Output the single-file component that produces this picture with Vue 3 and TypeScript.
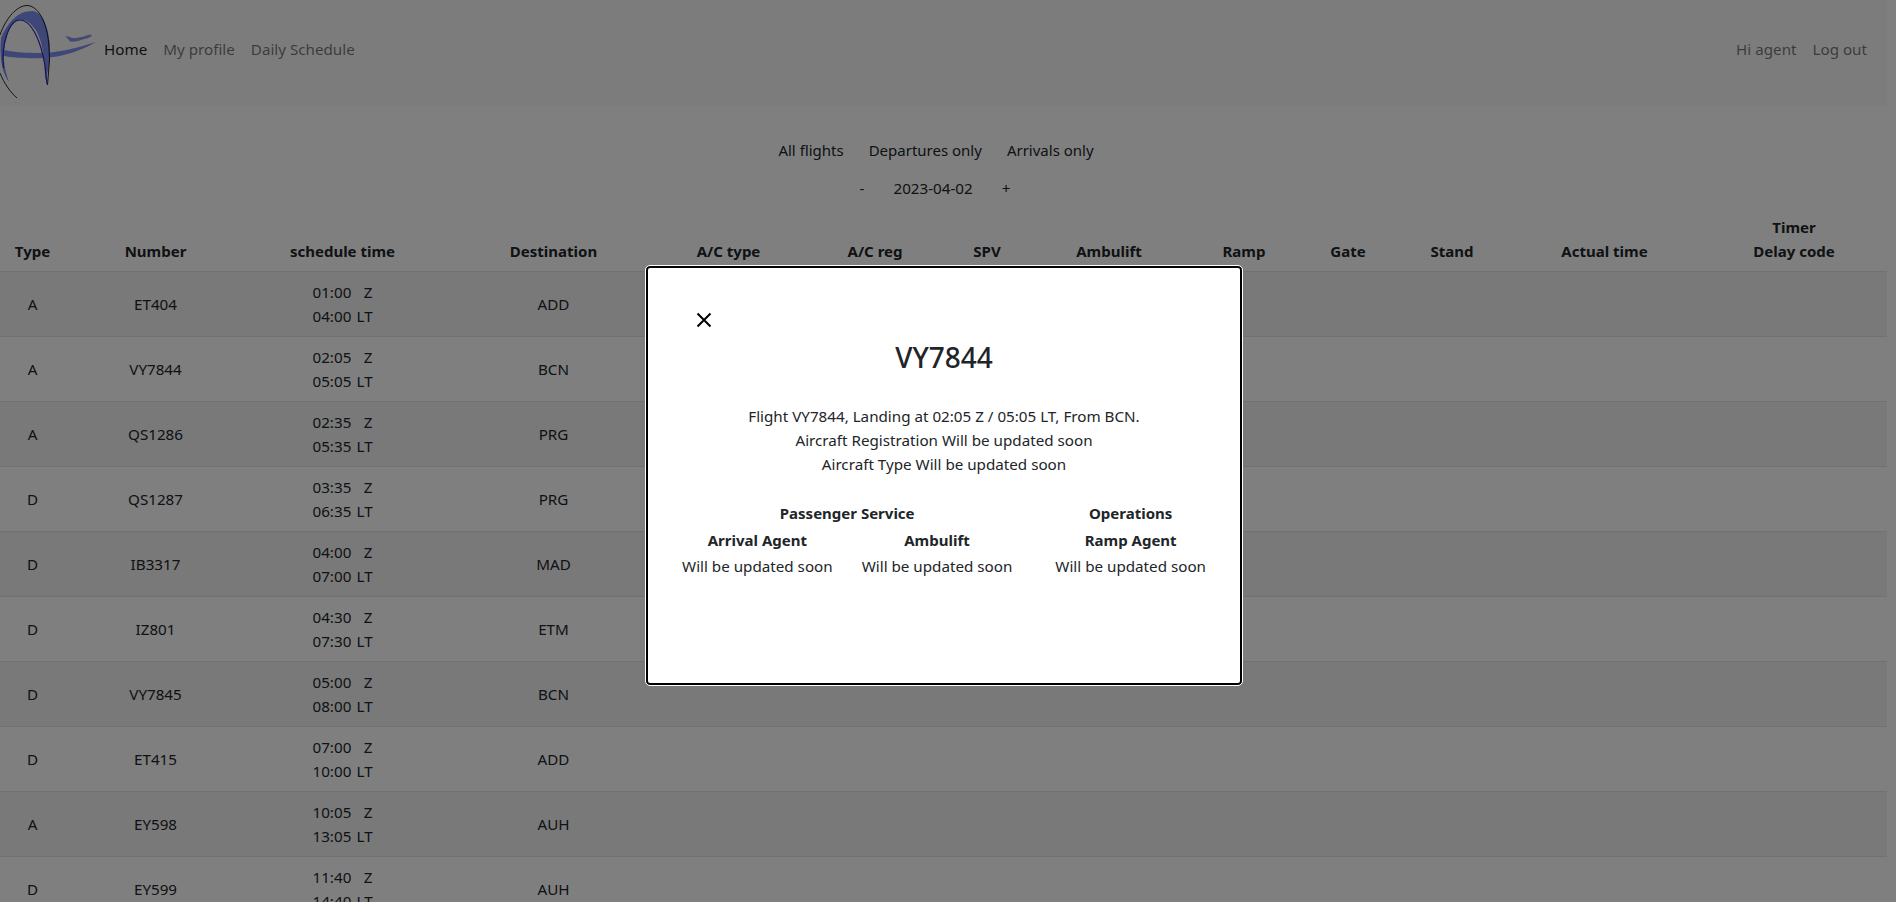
<template>
  <div class="page">
    <nav class="navbar">
      <svg class="logo" viewBox="0 0 100 100" aria-label="logo">
        <path d="M1 38 C8 22 18 11 32 11 C43 12 48 26 50 45 L50 58 C49 66 48 72 45 80 C45 60 43 44 37 32 C32 24 26 19 20 20 C12 21 7 32 5 44 C3 55 3 65 9 82 C3 74 -1 60 1 38Z" fill="#7f8cf0" />
        <path d="M4 50 C18 53 32 53 44 53 C62 52 80 47 96 42 C82 50 64 57 44 58 C30 58.5 14 58 4 56 Z" fill="#7f8cf0" />
        <path d="M65.5 36 L68.5 36.5 C70 37.5 73 38 76 38 L84 36.5 C87 35 90 34.5 92 35 C91 37 88 38.5 84 39 C80 41 74 42 70 41.5 Z" fill="#8a94e0" />
        <path d="M0 35 C6 18 17 5 28 5.5 C40 7 48 26 49 48 L49.5 60 L47.5 85" fill="none" stroke="#111" stroke-width="0.9" />
        <path d="M3.5 68 C1 44 9 20 20 20 C31 20 41 40 45 66 L47 84" fill="none" stroke="#2a2ab8" stroke-width="1.2" />
        <path d="M0 73 C4 83 10 92 17 98" fill="none" stroke="#111" stroke-width="0.9" />
      </svg>
      <ul class="nav-list">
        <li class="active">Home</li>
        <li>My profile</li>
        <li>Daily Schedule</li>
      </ul>
      <ul class="nav-list nav-right">
        <li>Hi agent</li>
        <li>Log out</li>
      </ul>
    </nav>

    <div class="filters">
      <span>All flights</span>
      <span>Departures only</span>
      <span>Arrivals only</span>
    </div>
    <div class="date-row">
      <span>-</span>
      <span>2023-04-02</span>
      <span>+</span>
    </div>

    <table class="flights">
      <colgroup>
        <col v-for="(w, i) in colWidths" :key="i" :style="{ width: w + 'px' }" />
      </colgroup>
      <thead>
        <tr>
          <th>Type</th>
          <th>Number</th>
          <th>schedule time</th>
          <th>Destination</th>
          <th>A/C type</th>
          <th>A/C reg</th>
          <th>SPV</th>
          <th>Ambulift</th>
          <th>Ramp</th>
          <th>Gate</th>
          <th>Stand</th>
          <th>Actual time</th>
          <th>Timer<br />Delay code</th>
        </tr>
      </thead>
      <tbody>
        <tr v-for="f in flights" :key="f.number">
          <td>{{ f.type }}</td>
          <td>{{ f.number }}</td>
          <td>
            <div class="time-line"><span class="t">{{ f.z }}</span><span class="u">Z</span></div>
            <div class="time-line"><span class="t">{{ f.lt }}</span><span class="u">LT</span></div>
          </td>
          <td>{{ f.dest }}</td>
          <td v-for="n in 9" :key="n"></td>
        </tr>
      </tbody>
    </table>

    <div class="backdrop"></div>

    <div class="modal">
      <button class="close" aria-label="Close">
        <svg viewBox="0 0 16 16" width="16" height="16">
          <path d="M1.5 1.5 L14.5 14.5 M14.5 1.5 L1.5 14.5" stroke="#000" stroke-width="2" fill="none" />
        </svg>
      </button>
      <h2 class="title">VY7844</h2>
      <p class="summary">
        Flight VY7844, Landing at 02:05 Z / 05:05 LT, From BCN.<br />
        Aircraft Registration Will be updated soon<br />
        Aircraft Type Will be updated soon
      </p>
      <div class="crew">
        <div class="group">
          <div class="group-title">Passenger Service</div>
          <div class="group-cols">
            <div class="cell">
              <strong>Arrival Agent</strong>
              <span>Will be updated soon</span>
            </div>
            <div class="cell">
              <strong>Ambulift</strong>
              <span>Will be updated soon</span>
            </div>
          </div>
        </div>
        <div class="group">
          <div class="group-title">Operations</div>
          <div class="group-cols">
            <div class="cell">
              <strong>Ramp Agent</strong>
              <span>Will be updated soon</span>
            </div>
          </div>
        </div>
      </div>
    </div>
  </div>
</template>

<script setup lang="ts">
interface Flight {
  type: string
  number: string
  z: string
  lt: string
  dest: string
}

const colWidths = [65, 181, 193, 229, 121, 172, 52, 192, 78, 130, 78, 227, 169]

const flights: Flight[] = [
  { type: 'A', number: 'ET404', z: '01:00', lt: '04:00', dest: 'ADD' },
  { type: 'A', number: 'VY7844', z: '02:05', lt: '05:05', dest: 'BCN' },
  { type: 'A', number: 'QS1286', z: '02:35', lt: '05:35', dest: 'PRG' },
  { type: 'D', number: 'QS1287', z: '03:35', lt: '06:35', dest: 'PRG' },
  { type: 'D', number: 'IB3317', z: '04:00', lt: '07:00', dest: 'MAD' },
  { type: 'D', number: 'IZ801', z: '04:30', lt: '07:30', dest: 'ETM' },
  { type: 'D', number: 'VY7845', z: '05:00', lt: '08:00', dest: 'BCN' },
  { type: 'D', number: 'ET415', z: '07:00', lt: '10:00', dest: 'ADD' },
  { type: 'A', number: 'EY598', z: '10:05', lt: '13:05', dest: 'AUH' },
  { type: 'D', number: 'EY599', z: '11:40', lt: '14:40', dest: 'AUH' },
]
</script>

<style>
html,
body {
  margin: 0;
  height: 100%;
  overflow: hidden;
  background: #fff;
}
</style>

<style scoped>
.page {
  width: 1887px;
  height: 902px;
  overflow: hidden;
  font-family: "Noto Sans", "Liberation Sans", sans-serif;
  font-size: 15.2px;
  line-height: 24px;
  color: #212529;
  background: #fff;
}

.navbar {
  display: flex;
  align-items: flex-start;
  height: 106px;
  background: #f8f9fa;
}

.logo {
  width: 100px;
  height: 100px;
  flex: none;
}

.nav-list {
  display: flex;
  gap: 16px;
  margin: 37px 0 0 4px;
  padding: 0;
  list-style: none;
  color: rgba(0, 0, 0, 0.55);
}

.nav-list .active {
  color: rgba(0, 0, 0, 0.9);
}

.nav-right {
  margin-left: auto;
  margin-right: 20px;
}

.filters {
  display: flex;
  justify-content: center;
  gap: 25px;
  margin-top: 32px;
  padding-right: 15px;
  font-size: 15px;
}

.date-row {
  display: flex;
  justify-content: center;
  gap: 29px;
  margin-top: 14px;
  padding-right: 17px;
}

.flights {
  width: 1887px;
  margin-top: 7px;
  table-layout: fixed;
  border-collapse: collapse;
}

.flights th,
.flights td {
  padding: 8px;
  text-align: center;
  vertical-align: bottom;
}

.flights th:last-child,
.flights td:last-child {
  padding-right: 25px;
}

.flights th {
  border-bottom: 1px solid #dee2e6;
  font-size: 15px;
  font-weight: 700;
}

.flights td {
  vertical-align: middle;
  border-bottom: 1px solid #dee2e6;
}

.flights tbody tr:nth-child(odd) {
  background: rgba(0, 0, 0, 0.05);
}

.time-line {
  display: flex;
  justify-content: center;
  gap: 6px;
}

.time-line .t {
  width: 38px;
}

.time-line .u {
  width: 16px;
  text-align: right;
}

.backdrop {
  position: fixed;
  inset: 0;
  background: rgba(0, 0, 0, 0.5);
}

.modal {
  position: fixed;
  left: 646px;
  top: 266px;
  width: 596px;
  height: 419px;
  box-sizing: border-box;
  background: #fff;
  border: 2px solid #000;
  border-radius: 4px;
  outline: 1px solid #fff;
  text-align: center;
  color: #212529;
}

.close {
  position: absolute;
  left: 48px;
  top: 44px;
  width: 16px;
  height: 16px;
  padding: 0;
  border: 0;
  background: none;
}

.close svg {
  display: block;
}

.title {
  margin: 72px 0 0;
  font-size: 28px;
  line-height: 34px;
  font-weight: 500;
}

.summary {
  margin: 30px 0 0;
}

.crew {
  display: flex;
  justify-content: center;
  gap: 43px;
  margin-top: 25px;
  white-space: nowrap;
}

.group-title {
  font-size: 15px;
  font-weight: 700;
  margin-bottom: 3px;
}

.group-cols {
  display: flex;
  gap: 29px;
}

.cell {
  display: flex;
  flex-direction: column;
  gap: 2px;
}

.cell strong {
  font-size: 15px;
  font-weight: 700;
}
</style>
